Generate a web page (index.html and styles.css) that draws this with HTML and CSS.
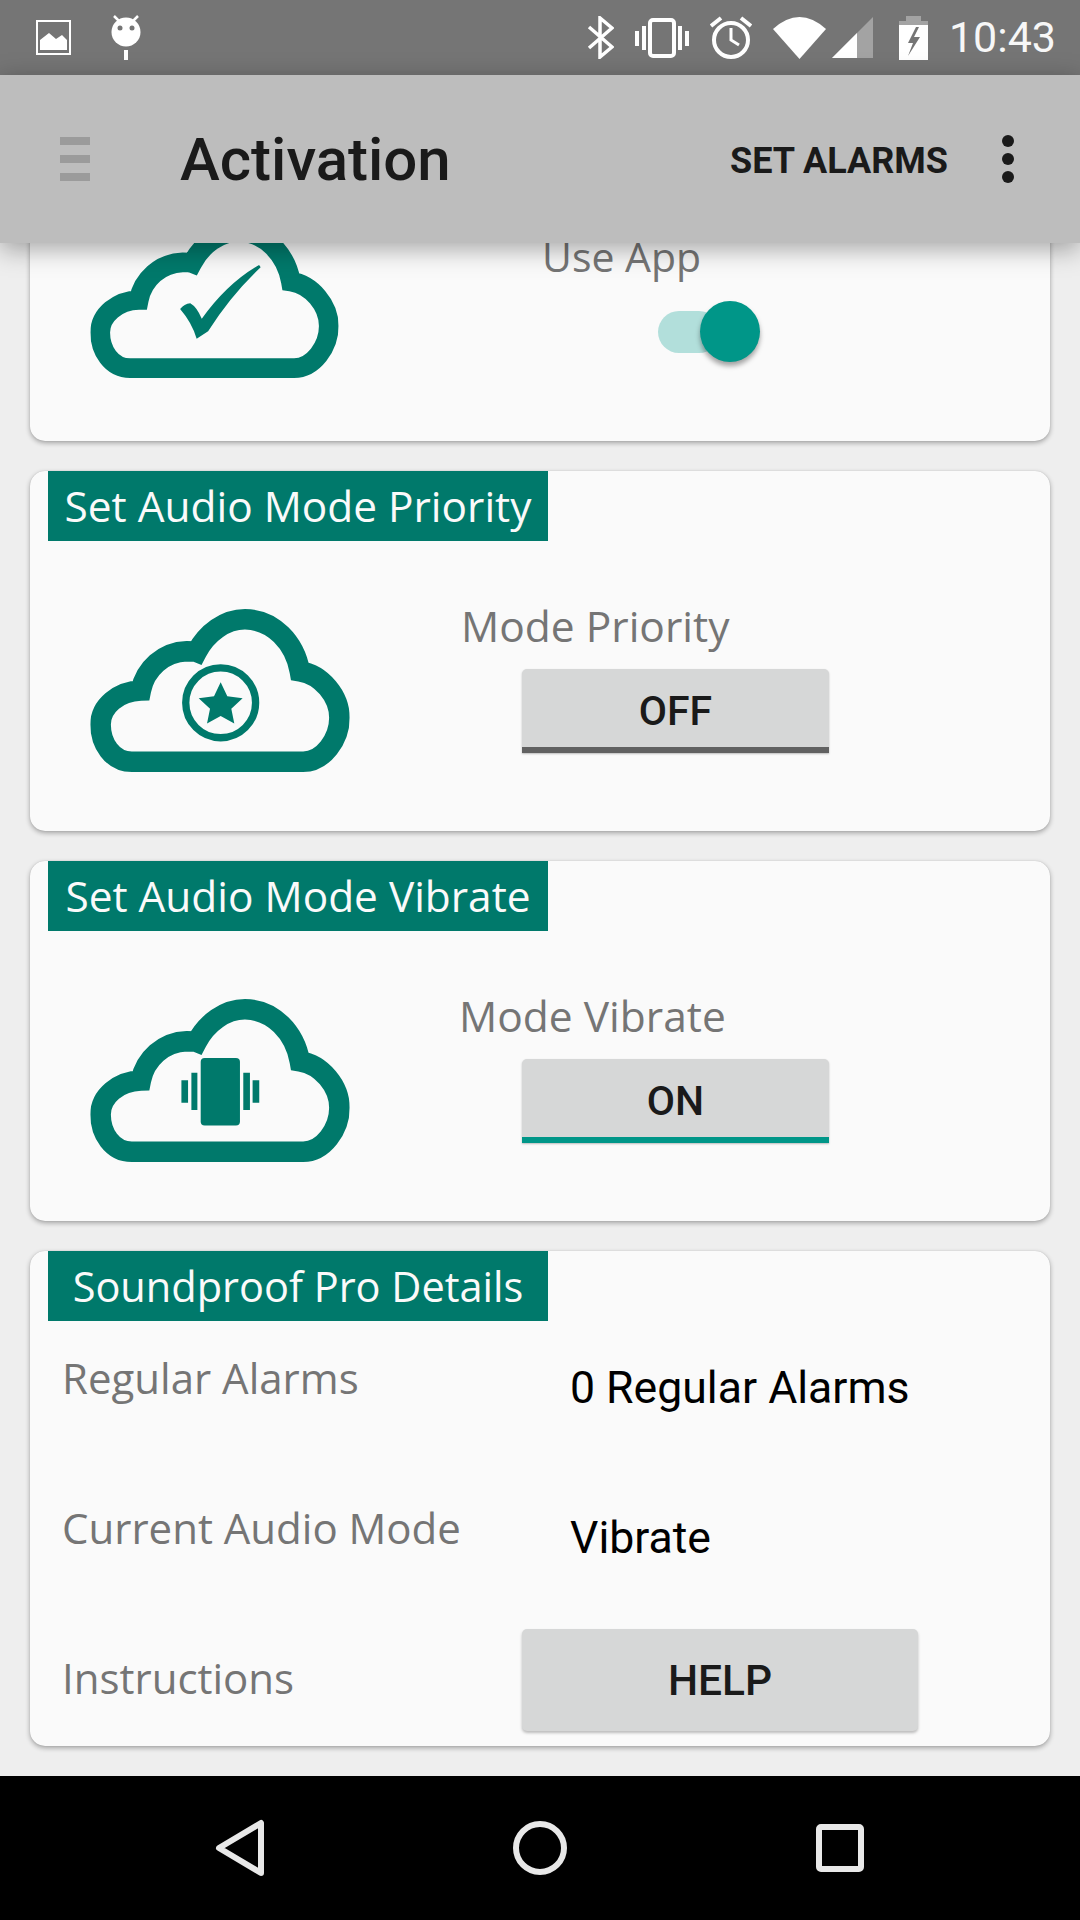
FILE: index.html
```html
<!DOCTYPE html>
<html lang="en">
<head>
<meta charset="utf-8">
<title>Activation</title>
<link rel="stylesheet" href="styles.css">
</head>
<body>
<svg class="defs" width="0" height="0" aria-hidden="true">
  <symbol id="cloud" viewBox="210 58 780 490">
    <path class="cloud-line" d="M335 517C275 517 241 460 241 405C241 350 295 305 362 303C375 238 430 187 500 185C512 185 525 185 530 187C560 130 615 89 675 89C760 89 825 160 840 245C905 255 959 320 959 385C959 450 910 517 850 517Z"/>
  </symbol>
</svg>
<div class="phone">
  <header class="status">
    <div class="status-left">
      <svg class="ic" width="35" height="35" viewBox="0 0 35 35"><rect x="1" y="1" width="33" height="33" fill="none" stroke="#fff" stroke-width="2"/><path d="M4 30V20L13 13L20 19L26 15L31 20V30Z" fill="#fff"/></svg>
      <svg class="ic" width="30" height="45" viewBox="0 0 30 45"><circle cx="15" cy="17" r="14.5" fill="#fff"/><path d="M3 1L8 6M27 1L22 6" stroke="#fff" stroke-width="2.5"/><circle cx="9" cy="13" r="2.5" fill="#757575"/><circle cx="21" cy="13" r="2.5" fill="#757575"/><rect x="13" y="35" width="4" height="10" fill="#fff"/></svg>
    </div>
    <div class="status-right">
      <svg class="ic" width="27" height="43" viewBox="0 0 27 43"><path d="M2 11L25 31L13 41V2L25 12L2 32" fill="none" stroke="#fff" stroke-width="3.5"/></svg>
      <svg class="ic" width="54" height="40" viewBox="0 0 54 40"><rect x="15" y="2" width="24" height="36" rx="3" fill="none" stroke="#fff" stroke-width="4"/><path d="M0 13h4v15H0zM7 8h4v24H7zM43 8h4v24h-4zM50 13h4v15h-4z" fill="#fff"/></svg>
      <svg class="ic" width="42" height="43" viewBox="0 0 42 43"><circle cx="21" cy="24" r="17" fill="none" stroke="#fff" stroke-width="4"/><path d="M21 12V24L29 29" fill="none" stroke="#fff" stroke-width="3"/><path d="M1 10L11 2M31 2L41 10" stroke="#fff" stroke-width="4"/></svg>
      <div class="net">
        <svg class="ic" width="53" height="42" viewBox="0 0 53 42"><path d="M0 12Q26.500 -12 53 12L26.500 42Z" fill="#fff"/></svg>
        <svg class="ic" width="42" height="43" viewBox="0 0 42 43"><path d="M0 42L41 1V42Z" fill="#a3a3a3"/><path d="M0 42L25 17V42Z" fill="#fff"/></svg>
      </div>
      <svg class="ic" width="29" height="44" viewBox="0 0 29 44"><path d="M7 0H22V5H29V9H0V5H7Z" fill="#a3a3a3"/><path d="M0 9H29V44H0Z" fill="#fff"/><path d="M17 11L9 27H14L9 40L21 21H15L20 11Z" fill="#757575"/></svg>
      <span class="clock">10:43</span>
    </div>
  </header>

  <nav class="appbar">
    <div class="burger"><i></i><i></i><i></i></div>
    <h1 class="title">Activation</h1>
    <span class="action">SET ALARMS</span>
    <div class="dots"><i></i><i></i><i></i></div>
  </nav>

  <main class="list">
    <section class="card card-use">
      <div class="card-body">
        <svg class="cloud cloud-small" viewBox="210 58 780 490">
          <use href="#cloud" x="210" y="58" width="780" height="490"/>
          <path class="glyph" d="M492 331Q505 315 524 313Q545 325 560 362Q640 250 740 193L745 200Q650 290 580 401L544 425Q530 375 492 331Z"/>
        </svg>
        <div class="control control-use">
          <span class="label label-use">Use App</span>
          <div class="switch"><span class="thumb"></span></div>
        </div>
      </div>
    </section>

    <section class="card">
      <h2 class="tag">Set Audio Mode Priority</h2>
      <div class="card-body">
        <svg class="cloud" viewBox="210 58 780 490">
          <use href="#cloud" x="210" y="58" width="780" height="490"/>
          <circle class="ring" cx="602" cy="340" r="105"/>
          <path class="glyph" d="M602 278L622 320L668 326L634 358L643 402L602 380L561 402L570 358L536 326L582 320Z"/>
        </svg>
        <div class="control">
          <span class="label label-priority">Mode Priority</span>
          <button class="btn btn-off">OFF</button>
        </div>
      </div>
    </section>

    <section class="card">
      <h2 class="tag">Set Audio Mode Vibrate</h2>
      <div class="card-body">
        <svg class="cloud" viewBox="210 58 780 490">
          <use href="#cloud" x="210" y="58" width="780" height="490"/>
          <rect class="glyph" x="542" y="235" width="118" height="203" rx="12"/>
          <path class="glyph" d="M514 280h18v112h-18zM484 302h20v68h-20zM670 280h20v112h-20zM698 302h20v68h-20z"/>
        </svg>
        <div class="control">
          <span class="label label-vibrate">Mode Vibrate</span>
          <button class="btn btn-on">ON</button>
        </div>
      </div>
    </section>

    <section class="card card-details">
      <h2 class="tag tag-details">Soundproof Pro Details</h2>
      <div class="details">
        <div class="row row-alarms"><span class="label key">Regular Alarms</span><span class="value">0 Regular Alarms</span></div>
        <div class="row row-mode"><span class="label key">Current Audio Mode</span><span class="value">Vibrate</span></div>
        <div class="row row-help"><span class="label key key-help">Instructions</span><button class="btn btn-help">HELP</button></div>
      </div>
    </section>
  </main>

  <footer class="navbar">
    <svg class="ic" width="50" height="58" viewBox="0 0 50 58"><path d="M46 4V54L4 29Z" fill="none" stroke="#e8e8e8" stroke-width="6" stroke-linejoin="round"/></svg>
    <svg class="ic" width="54" height="54" viewBox="0 0 54 54"><circle cx="27" cy="27" r="24" fill="none" stroke="#e8e8e8" stroke-width="6"/></svg>
    <svg class="ic" width="48" height="48" viewBox="0 0 48 48"><rect x="3" y="3" width="42" height="42" rx="2" fill="none" stroke="#e8e8e8" stroke-width="6"/></svg>
  </footer>
</div>
</body>
</html>
```
FILE: styles.css
```css
* { box-sizing: border-box; }
html, body { margin: 0; padding: 0; }
.defs { position: absolute; }
.phone {
  width: 1080px; height: 1920px; display: flex; flex-direction: column;
  background: #eeeeee; overflow: hidden; font-family: Roboto, sans-serif;
}
.ic { display: block; flex: none; }

.status {
  height: 75px; flex: none; background: #757575; display: flex; align-items: center;
  justify-content: space-between; padding: 0 24px 0 36px;
}
.status-left { display: flex; align-items: center; gap: 40px; }
.status-right { display: flex; align-items: center; gap: 21px; }
.net { display: flex; align-items: center; gap: 6px; margin-right: 4px; }
.clock { color: #f7f7f7; font-size: 43px; line-height: 1; }

.appbar {
  height: 168px; flex: none; background: #bdbdbd; display: flex; align-items: center;
  position: relative; z-index: 2; box-shadow: 0 6px 24px rgba(0,0,0,.34);
  padding: 0 0 0 60px;
}
.burger { width: 30px; display: flex; flex-direction: column; gap: 10px; }
.burger i { height: 8px; background: #9b9b9b; display: block; }
.title { margin: 2px 0 0 90px; font-size: 60px; font-weight: 500; color: #1a1a1a; line-height: 1; }
.action { margin: 3px 0 0 auto; font-size: 36px; font-weight: 700; color: #1a1a1a; line-height: 1; }
.dots { width: 12px; margin: -1px 66px 0 54px; display: flex; flex-direction: column; gap: 6px; }
.dots i { width: 12px; height: 12px; border-radius: 50%; background: #1a1a1a; display: block; }

.list {
  flex: 1; min-height: 0; overflow: hidden; display: flex; flex-direction: column;
  justify-content: flex-end; gap: 30px; padding: 0 30px 30px;
}
.card {
  flex: none; height: 360px; background: #fafafa; border-radius: 15px;
  box-shadow: 0 2px 5px rgba(0,0,0,.32), 0 0 1px rgba(0,0,0,.2);
}
.card-details { height: 495px; }
.tag {
  margin: 0 0 0 18px; width: 500px; height: 70px; background: #00796b; color: #fafafa;
  font-family: "Open Sans", sans-serif; font-weight: 400; font-size: 42.4px; line-height: 70px; text-align: center;
}
.tag-details { font-size: 41.5px; }
.card-body { display: flex; align-items: flex-start; }
.card-use .card-body { padding-top: 69px; }
.cloud { width: 260px; height: 163px; margin: 68px 0 0 60px; flex: none; overflow: visible; }
.cloud-small { width: 249px; height: 156px; margin-top: 72px; }
.cloud-line { fill: none; stroke: #00796b; stroke-width: 62; stroke-linejoin: miter; stroke-miterlimit: 6; }
.glyph { fill: #00796b; }
.ring { fill: none; stroke: #00796b; stroke-width: 22; }

.control { display: flex; flex-direction: column; margin-top: 60px; }
.label { font-family: "Open Sans", sans-serif; color: #757575; font-size: 42px; line-height: 50px; white-space: nowrap; }
.label-priority { margin-left: 111px; font-size: 42.500px; }
.label-vibrate { margin-left: 109px; font-size: 42.500px; }
.label-use { margin-left: 203px; font-size: 41px; }
.control-use { margin-top: 81px; }

.btn {
  border: 0; padding: 0; font-family: Roboto, sans-serif; font-weight: 500; font-size: 41px; color: #1a1a1a;
  background: #d6d7d7; border-radius: 5px 5px 0 0; box-shadow: 0 1px 2px rgba(0,0,0,.25); display: block;
}
.control .btn { width: 307px; height: 84px; margin: 18px 0 0 172px; padding-top: 6px; }
.btn-off { border-bottom: 6px solid #616161; }
.btn-on { border-bottom: 6px solid #009688; }
.btn-help { width: 396px; height: 102px; border-radius: 5px; margin-left: 30px; font-size: 42.500px; box-shadow: 0 2px 3px rgba(0,0,0,.25); }

.switch { position: relative; width: 62px; height: 42px; margin: 30px 0 0 319px; background: #b2dfdb; border-radius: 21px; }
.thumb {
  position: absolute; left: 42px; top: -10px; width: 60px; height: 61px; border-radius: 50%;
  background: #009688; box-shadow: 0 4px 5px rgba(0,0,0,.35);
}

.details { padding: 32px 0 0 32px; }
.row { display: flex; align-items: flex-start; }
.row-alarms { height: 150px; }
.row-mode { height: 126px; }
.row-help { height: 102px; align-items: center; }
.key { width: 430px; flex: none; }
.key-help { padding-bottom: 4px; }
.value { margin: 10px 0 0 78px; font-size: 44.600px; line-height: 50px; color: #000; }

.navbar {
  height: 144px; flex: none; background: #000; display: grid;
  grid-template-columns: repeat(3, 300px); justify-content: center; justify-items: center; align-items: center;
}
```
